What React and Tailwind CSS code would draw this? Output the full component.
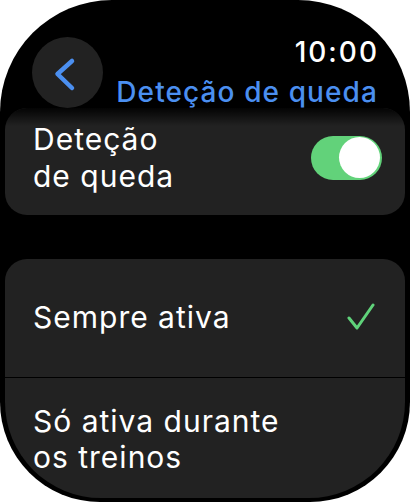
import React from "react";

export default function App() {
  return (
    <div className="w-[410px] h-[502px] bg-white overflow-hidden font-['Inter','Noto_Sans',sans-serif]">
      <div className="relative w-[410px] h-[502px] bg-black rounded-t-[112px] rounded-b-[100px] overflow-hidden flex flex-col">
        {/* Header */}
        <div className="flex justify-between items-start pl-[32px] pr-[33px] pt-[35px] h-[108px] shrink-0 relative z-10">
          <div className="mt-[2px] w-[71px] h-[71px] rounded-full bg-[#222222] flex items-center justify-center">
            <svg width="71" height="71" viewBox="0 0 71 71">
              <polyline
                points="40,24 25.5,37 40,51"
                fill="none"
                stroke="#4b8ff0"
                strokeWidth="4.5"
                strokeLinecap="round"
                strokeLinejoin="round"
              />
            </svg>
          </div>
          <div className="flex flex-col items-end">
            <div className="text-white text-[28px] leading-[34px] font-medium tracking-[2px] mr-[-2px]">10:00</div>
            <div className="mt-[8px] text-[#4b8ff0] text-[28px] leading-[30px] font-medium tracking-[1.1px] mr-[-1px]">
              Deteção de queda
            </div>
          </div>
        </div>

        <div className="px-[5px] flex flex-col">
          {/* Card 1 */}
          <div className="relative h-[107px] rounded-[22px] bg-[#222222] flex items-center justify-between pl-[28px] pr-[23px] pb-[8px] overflow-hidden">
            <div className="absolute inset-x-0 top-0 h-[18px] bg-gradient-to-b from-black to-transparent opacity-90" />
            <div className="relative text-white text-[30px] leading-[37px] tracking-[1px]">
              Deteção
              <br />
              de queda
            </div>
            <div className="relative w-[71px] h-[44px] rounded-full bg-[#62d27a] flex items-center justify-end pr-[2px]">
              <div className="w-[41px] h-[41px] rounded-full bg-white" />
            </div>
          </div>

          {/* Card 2 */}
          <div className="mt-[44px] h-[239px] rounded-t-[22px] rounded-b-[96px] bg-[#222222] overflow-hidden flex flex-col">
            <div className="h-[118px] flex items-center justify-between pl-[28px] pr-[30px] pb-[2px] shrink-0">
              <div className="text-white text-[30px] leading-[36px] tracking-[1px]">Sempre ativa</div>
              <svg width="28" height="28" viewBox="0 0 28 28">
                <polyline
                  points="2,15 10,25 26,2"
                  fill="none"
                  stroke="#5fd27a"
                  strokeWidth="3"
                  strokeLinecap="round"
                  strokeLinejoin="round"
                />
              </svg>
            </div>
            <div className="h-px bg-black shrink-0" />
            <div className="pl-[28px] pt-[25px] text-white text-[30px] leading-[36px] tracking-[1px]">
              Só ativa durante
              <br />
              os treinos
            </div>
          </div>
        </div>
      </div>
    </div>
  );
}
